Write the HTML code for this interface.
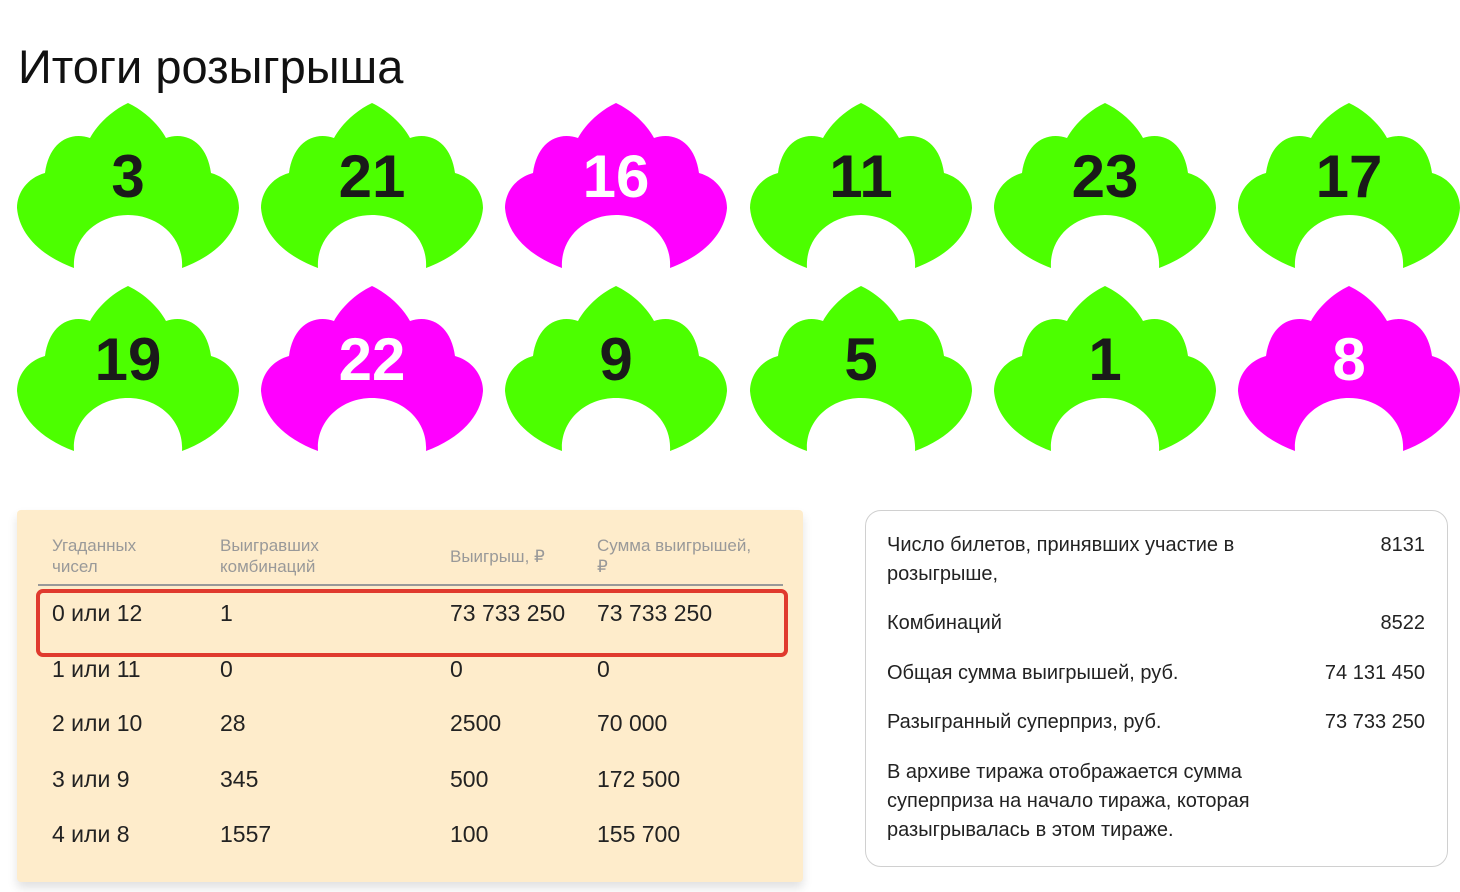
<!DOCTYPE html>
<html><head><meta charset="utf-8"><style>
body{margin:0;width:1460px;height:892px;background:#fff;position:relative;overflow:hidden;font-family:"Liberation Sans",sans-serif;color:#222}
.a{position:absolute;white-space:nowrap}
.c{transform:scaleX(1.0);transform-origin:left top}
.r{text-align:right}
svg.k{position:absolute;width:222px;height:165px}
.n{position:absolute;width:222px;text-align:center;font-weight:bold;font-size:60px;line-height:60px}
.h{font-size:17px;color:#999;line-height:21px;transform:scaleX(1.0);transform-origin:left top}
.t{font-size:23px;line-height:26px;color:#222}
.s{font-size:20px;line-height:29px;color:#222}
</style></head><body>
<div class="a" style="left:18px;top:39px;font-size:47px;line-height:56px;color:#111">Итоги розыгрыша</div>
<svg width="0" height="0" style="position:absolute"><defs><path id="kk" d="M111,0 C128,8 142,22 149,35 C170,28 190,40 194,70 C212,75 222,90 222,105 C220,130 200,152 165,165 C167,135 142,112 111,112 C80,112 55,135 57,165 C22,152 2,130 0,105 C0,90 10,75 28,70 C32,40 52,28 73,35 C80,22 94,8 111,0 Z"/></defs></svg>
<!-- row 1 -->
<svg class="k" style="left:17px;top:103px" viewBox="0 0 222 165"><use href="#kk" fill="#4cff00"/></svg><div class="n" style="left:17px;top:147px;color:#1a1a1a">3</div>
<svg class="k" style="left:261px;top:103px" viewBox="0 0 222 165"><use href="#kk" fill="#4cff00"/></svg><div class="n" style="left:261px;top:147px;color:#1a1a1a">21</div>
<svg class="k" style="left:505px;top:103px" viewBox="0 0 222 165"><use href="#kk" fill="#ff00ff"/></svg><div class="n" style="left:505px;top:147px;color:#fff">16</div>
<svg class="k" style="left:750px;top:103px" viewBox="0 0 222 165"><use href="#kk" fill="#4cff00"/></svg><div class="n" style="left:750px;top:147px;color:#1a1a1a">11</div>
<svg class="k" style="left:994px;top:103px" viewBox="0 0 222 165"><use href="#kk" fill="#4cff00"/></svg><div class="n" style="left:994px;top:147px;color:#1a1a1a">23</div>
<svg class="k" style="left:1238px;top:103px" viewBox="0 0 222 165"><use href="#kk" fill="#4cff00"/></svg><div class="n" style="left:1238px;top:147px;color:#1a1a1a">17</div>
<!-- row 2 -->
<svg class="k" style="left:17px;top:286px" viewBox="0 0 222 165"><use href="#kk" fill="#4cff00"/></svg><div class="n" style="left:17px;top:330px;color:#1a1a1a">19</div>
<svg class="k" style="left:261px;top:286px" viewBox="0 0 222 165"><use href="#kk" fill="#ff00ff"/></svg><div class="n" style="left:261px;top:330px;color:#fff">22</div>
<svg class="k" style="left:505px;top:286px" viewBox="0 0 222 165"><use href="#kk" fill="#4cff00"/></svg><div class="n" style="left:505px;top:330px;color:#1a1a1a">9</div>
<svg class="k" style="left:750px;top:286px" viewBox="0 0 222 165"><use href="#kk" fill="#4cff00"/></svg><div class="n" style="left:750px;top:330px;color:#1a1a1a">5</div>
<svg class="k" style="left:994px;top:286px" viewBox="0 0 222 165"><use href="#kk" fill="#4cff00"/></svg><div class="n" style="left:994px;top:330px;color:#1a1a1a">1</div>
<svg class="k" style="left:1238px;top:286px" viewBox="0 0 222 165"><use href="#kk" fill="#ff00ff"/></svg><div class="n" style="left:1238px;top:330px;color:#fff">8</div>

<!-- table -->
<div class="a" style="left:17px;top:510px;width:786px;height:372px;background:#feeccb;border-radius:4px;box-shadow:0 6px 10px rgba(0,0,0,0.12)"></div>
<div class="a h" style="left:52px;top:535px">Угаданных<br>чисел</div>
<div class="a h" style="left:220px;top:535px">Выигравших<br>комбинаций</div>
<div class="a h" style="left:450px;top:546px">Выигрыш, ₽</div>
<div class="a h" style="left:597px;top:535px">Сумма выигрышей,<br>₽</div>
<div class="a" style="left:38px;top:584px;width:745px;height:2px;background:#999"></div>
<div class="a" style="left:36px;top:589px;width:744px;height:60px;border:4px solid #e03a2e;border-radius:7px"></div>
<div class="a t" style="left:52px;top:600px">0 или 12</div><div class="a t" style="left:220px;top:600px">1</div><div class="a t" style="left:450px;top:600px">73 733 250</div><div class="a t" style="left:597px;top:600px">73 733 250</div>
<div class="a t" style="left:52px;top:656px">1 или 11</div><div class="a t" style="left:220px;top:656px">0</div><div class="a t" style="left:450px;top:656px">0</div><div class="a t" style="left:597px;top:656px">0</div>
<div class="a t" style="left:52px;top:710px">2 или 10</div><div class="a t" style="left:220px;top:710px">28</div><div class="a t" style="left:450px;top:710px">2500</div><div class="a t" style="left:597px;top:710px">70 000</div>
<div class="a t" style="left:52px;top:766px">3 или 9</div><div class="a t" style="left:220px;top:766px">345</div><div class="a t" style="left:450px;top:766px">500</div><div class="a t" style="left:597px;top:766px">172 500</div>
<div class="a t" style="left:52px;top:821px">4 или 8</div><div class="a t" style="left:220px;top:821px">1557</div><div class="a t" style="left:450px;top:821px">100</div><div class="a t" style="left:597px;top:821px">155 700</div>

<!-- info box -->
<div class="a" style="left:865px;top:510px;width:581px;height:355px;border:1.5px solid #d0d0d0;border-radius:16px"></div>
<div class="a s" style="left:887px;top:531px">Число билетов, принявших участие в<br>розыгрыше,</div>
<div class="a s r" style="right:35px;top:531px">8131</div>
<div class="a s" style="left:887px;top:609px">Комбинаций</div><div class="a s r" style="right:35px;top:609px">8522</div>
<div class="a s" style="left:887px;top:659px">Общая сумма выигрышей, руб.</div><div class="a s r" style="right:35px;top:659px">74 131 450</div>
<div class="a s" style="left:887px;top:708px">Разыгранный суперприз, руб.</div><div class="a s r" style="right:35px;top:708px">73 733 250</div>
<div class="a s" style="left:887px;top:758px">В архиве тиража отображается сумма<br>суперприза на начало тиража, которая<br>разыгрывалась в этом тираже.</div>
</body></html>
